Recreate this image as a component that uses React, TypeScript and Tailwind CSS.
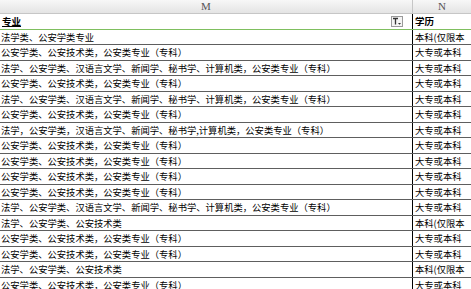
import React from 'react';

const GA = '公安学类、公安技术类，公安类专业（专科）';
const FX = '法学、公安学类、汉语言文学、新闻学、秘书学、计算机类，公安类专业（专科）';
const FX2 = '法学，公安学类，汉语言文学、新闻学、秘书学,计算机类，公安类专业（专科）';
const FG = '法学、公安学类、公安技术类';
const BK = '本科(仅限本科)';
const DZ = '大专或本科';

const rows: [string, string][] = [
    ['法学类、公安学类专业', BK],
    [GA, DZ],
    [FX, DZ],
    [GA, DZ],
    [FX, DZ],
    [GA, DZ],
    [FX2, DZ],
    [GA, DZ],
    [GA, DZ],
    [GA, DZ],
    [GA, DZ],
    [FX, DZ],
    [FG, BK],
    [GA, DZ],
    [GA, DZ],
    [FG, BK],
    [GA, DZ],
];

function FilterButton() {
    return (
        <div className="w-[12px] h-[11px] border border-[#9a9a9a] bg-[#f4f4f4] flex items-center justify-center">
            <svg width="10" height="9" viewBox="0 0 10 9">
                <path d="M1 1.5h5M3.5 1.5v6" stroke="#333" strokeWidth="1.3" fill="none" />
                <path d="M6 6h3l-1.5 1.8z" fill="#333" />
            </svg>
        </div>
    );
}

export default function App() {
    return (
        <div
            className="w-[471px] h-[289px] overflow-hidden bg-white flex flex-col text-black"
            style={{ fontFamily: '"Noto Sans CJK SC", "Liberation Sans", sans-serif' }}
        >
            {/* column letters */}
            <div className="flex h-[14px] shrink-0 bg-gradient-to-b from-[#f7f7f7] to-[#e4e4e4] border-b border-[#c6c6c6]">
                <div className="w-[413px] border-r border-[#c6c6c6] flex items-center justify-center text-[11px] leading-none text-[#555] font-['Liberation_Serif',serif]">
                    M
                </div>
                <div className="flex-1 flex items-center justify-center text-[11px] leading-none text-[#555] font-['Liberation_Serif',serif]">
                    N
                </div>
            </div>

            {/* header row */}
            <div className="flex h-[16px] shrink-0 border-b border-[#7fbf5f]">
                <div className="w-[413px] border-r border-black flex items-center justify-between pl-[2px] pr-[9px]">
                    <span className="text-[9.5px] font-bold leading-none underline">专业</span>
                    <FilterButton />
                </div>
                <div className="flex-1 flex items-center pl-[2px]">
                    <span className="text-[9.5px] font-bold leading-none">学历</span>
                </div>
            </div>

            {rows.map(([m, n], i) => (
                <div
                    key={i}
                    className={`flex shrink-0 overflow-hidden border-b border-[#5e5e5e] ${i % 2 === 0 ? 'h-[15px]' : 'h-[16px]'}`}
                >
                    <div className="w-[413px] border-r border-black pl-[1px] text-[9.3px] leading-[15px] whitespace-nowrap overflow-hidden">
                        {m}
                    </div>
                    <div className="flex-1 pl-[2px] text-[9.3px] leading-[13px] pt-[1px] overflow-hidden break-all">
                        {n}
                    </div>
                </div>
            ))}

            <div className="h-[4px] shrink-0 bg-[#dbe6f4]" />
        </div>
    );
}
